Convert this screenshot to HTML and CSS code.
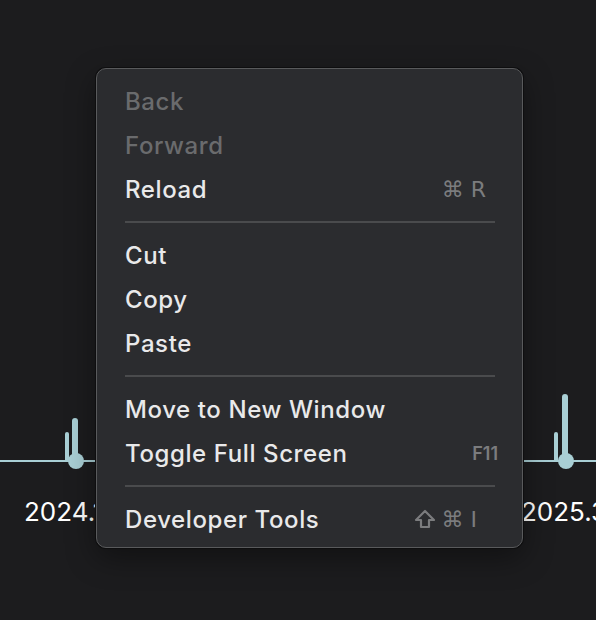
FILE: index.html
```html
<!DOCTYPE html>
<html>
<head>
<meta charset="utf-8">
<link rel="stylesheet" href="styles.css">
</head>
<body>
<div class="stage">
  <div class="axis"></div>
  <div class="bar thick" style="left:72px; top:418px; height:43px"></div>
  <div class="bar thin" style="left:65px; top:432px; height:29px"></div>
  <div class="dot" style="left:68px; top:453px"></div>
  <div class="bar thick" style="left:562px; top:394px; height:67px"></div>
  <div class="bar thin" style="left:554px; top:432px; height:29px"></div>
  <div class="dot" style="left:558px; top:453px"></div>
  <div class="label" style="left:24px; top:496px">2024.12</div>
  <div class="label" style="left:521px; top:496px">2025.3</div>

  <div class="menu">
    <div class="item disabled"><span>Back</span></div>
    <div class="item disabled"><span>Forward</span></div>
    <div class="item"><span>Reload</span><span class="key key-r">⌘ R</span></div>
    <div class="sep"></div>
    <div class="item"><span>Cut</span></div>
    <div class="item"><span>Copy</span></div>
    <div class="item"><span>Paste</span></div>
    <div class="sep"></div>
    <div class="item"><span>Move to New Window</span></div>
    <div class="item"><span>Toggle Full Screen</span><span class="key key-f">F11</span></div>
    <div class="sep"></div>
    <div class="item"><span>Developer Tools</span><span class="key key-i"><svg class="shift" width="22" height="20" viewBox="0 0 22 20"><path d="M11 2 L20 11 H15 V18 H7 V11 H2 Z" fill="none" stroke="currentColor" stroke-width="2.2" stroke-linejoin="round"/></svg>⌘ I</span></div>
  </div>
</div>
</body>
</html>
```
FILE: styles.css
```css
html, body {
  margin: 0;
  padding: 0;
  background: #1c1c1e;
  overflow: hidden;
}
.stage {
  position: relative;
  width: 596px;
  height: 620px;
  background: #1c1c1e;
  overflow: hidden;
  font-family: Inter, "Noto Sans", "DejaVu Sans", sans-serif;
}
.axis {
  position: absolute;
  left: 0;
  right: 0;
  top: 460px;
  height: 2px;
  background: #a9cfd5;
}
.bar {
  position: absolute;
  background: #a9cfd5;
  border-radius: 3px 3px 0 0;
}
.thick { width: 6px; }
.thin { width: 4px; }
.dot {
  position: absolute;
  width: 16px;
  height: 16px;
  border-radius: 50%;
  background: #a9cfd5;
}
.label {
  position: absolute;
  color: #ffffff;
  font-size: 26px;
  line-height: 32px;
  white-space: nowrap;
  font-family: Inter, "Noto Sans", sans-serif;
}
.menu {
  position: absolute;
  left: 96px;
  top: 68px;
  width: 427px;
  height: 480px;
  box-sizing: border-box;
  padding: 10px 27px 0 28px;
  background: #2b2c2f;
  border: 1px solid #595a5c;
  border-radius: 10px;
  box-shadow: 0 0 0 1px #0e0e0f, 0 10px 30px rgba(0,0,0,0.4);
}
.item {
  height: 44px;
  display: flex;
  align-items: center;
  justify-content: space-between;
  color: #e9e9ea;
  font-size: 24px;
  font-weight: 500;
  letter-spacing: 0.6px;
}
.item.disabled { color: #6a6b6d; }
.sep {
  height: 2px;
  margin: 10px 0 10px 0;
  background: #4a4b4d;
}
.key {
  color: #7b7c7e;
  font-size: 22px;
  font-weight: 400;
  letter-spacing: 0;
  display: flex;
  align-items: center;
  font-family: "DejaVu Sans", Inter, sans-serif;
}
.key-r { margin-right: 9px; }
.key-f {
  font-family: Inter, sans-serif;
  font-weight: 600;
  font-size: 18px;
  margin-right: -3px;
}
.key-i { margin-right: 18px; }
.shift { margin-right: 6px; }
```
